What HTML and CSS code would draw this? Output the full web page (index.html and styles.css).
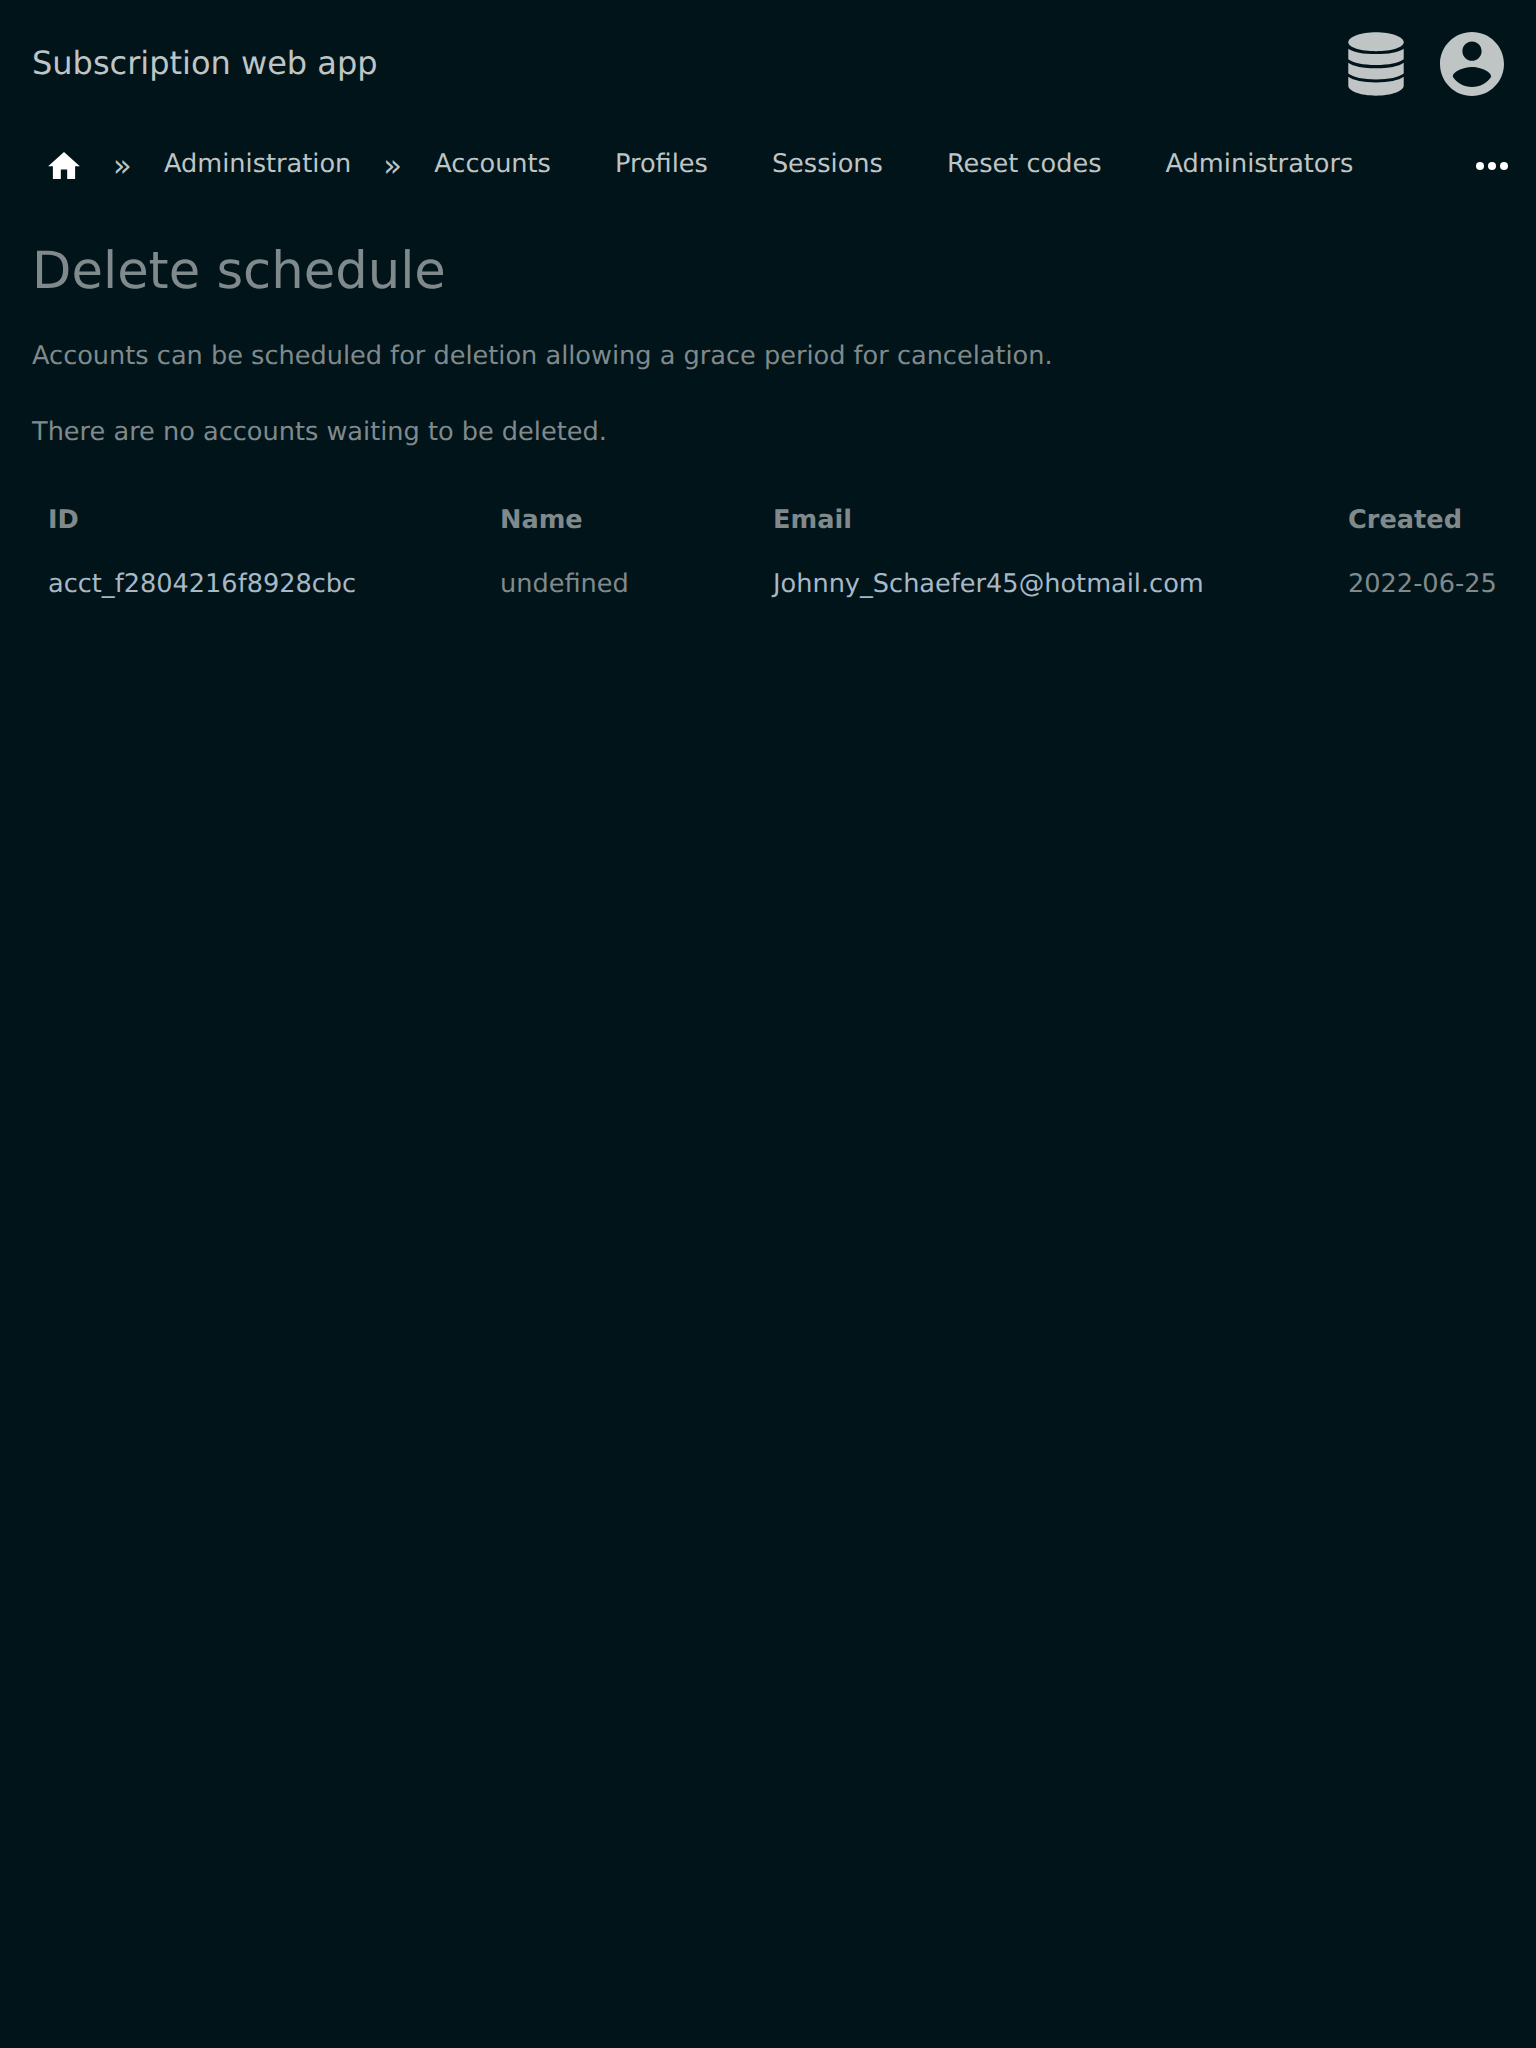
FILE: index.html
```html
<!DOCTYPE html>
<html lang="en">
<head>
<meta charset="utf-8">
<title>Delete schedule</title>
<link rel="stylesheet" href="styles.css">
</head>
<body>
<header class="header">
  <a class="brand">Subscription web app</a>
  <div class="menus">
    <svg class="icon-admin" viewBox="-.3 0 56.600 64"><path d="M28 0C43.500 0 56 4.700 56 10S43.500 19 28 19 0 15.300 0 10 12.500 0 28 0z"/><path d="M0 16.500C5 20 15 22 28 22s23-2 28-5.500V27.200C51 31 41 33 28 33S5 31 0 27.200z"/><path d="M0 30.700C5 34.300 15 36.400 28 36.400s23-2.100 28-5.700V41.600C51 45.500 41 47.600 28 47.600S5 45.500 0 41.600z"/><path d="M0 45C5 48.600 15 50.700 28 50.700s23-2.100 28-5.700V54C56 59.300 43.500 64 28 64S0 59.300 0 54z"/></svg>
    <svg class="icon-account" viewBox="2 2 20 20"><path d="M12 2C6.480 2 2 6.480 2 12s4.480 10 10 10 10-4.480 10-10S17.520 2 12 2zm0 3c1.660 0 3 1.340 3 3s-1.340 3-3 3-3-1.340-3-3 1.340-3 3-3zm0 14.200c-2.500 0-4.710-1.280-6-3.220.03-1.990 4-3.080 6-3.080 1.990 0 5.970 1.090 6 3.080-1.290 1.940-3.500 3.220-6 3.220z"/></svg>
  </div>
</header>
<nav class="nav">
  <svg class="icon-home" viewBox="2 3 20 17"><path d="M10 20v-6h4v6h5v-8h3L12 3 2 12h3v8z"/></svg>
  <span class="separator">»</span>
  <a>Administration</a>
  <span class="separator">»</span>
  <a>Accounts</a>
  <a>Profiles</a>
  <a>Sessions</a>
  <a>Reset codes</a>
  <a>Administrators</a>
  <svg class="icon-more" viewBox="0 0 32 8"><circle cx="4" cy="4" r="4"/><circle cx="16" cy="4" r="4"/><circle cx="28" cy="4" r="4"/></svg>
</nav>
<main class="content">
  <h1>Delete schedule</h1>
  <p>Accounts can be scheduled for deletion allowing a grace period for cancelation.</p>
  <p>There are no accounts waiting to be deleted.</p>
  <table>
    <colgroup><col class="col-id"><col class="col-name"><col class="col-email"><col></colgroup>
    <thead><tr><th>ID</th><th>Name</th><th>Email</th><th>Created</th></tr></thead>
    <tbody><tr><td><a>acct_f2804216f8928cbc</a></td><td>undefined</td><td><a>Johnny_Schaefer45@hotmail.com</a></td><td>2022-06-25</td></tr></tbody>
  </table>
</main>
</body>
</html>
```
FILE: styles.css
```css
* { box-sizing: border-box; }
html { background: #001419; }
body {
  margin: 0;
  font-family: "DejaVu Sans", sans-serif;
  font-size: 25.6px;
  line-height: 38px;
  color: #808a8c;
  text-rendering: geometricPrecision;
}
svg { display: block; flex: none; }
.header {
  display: flex;
  align-items: center;
  justify-content: space-between;
  height: 128px;
  padding: 0 32px;
}
.brand { padding-bottom: 2px; font-size: 32px; color: #bfc4c5; }
.menus { display: flex; gap: 36px; fill: #bfc4c5; }
.icon-admin { width: 56px; height: 64px; }
.icon-account { width: 64px; height: 64px; }
.nav {
  display: flex;
  align-items: center;
  height: 72px;
  padding: 0 28px 0 48px;
  color: #bfc4c5;
  white-space: nowrap;
}
.nav a { padding: 0 32px; }
.nav .separator { width: 19px; padding-top: 3px; font-size: 30.72px; }
.icon-home { width: 32px; height: 27px; margin: 3px 33px 0 0; fill: #fff; }
.icon-more { width: 32px; height: 8px; margin: 4px 0 0 auto; fill: #fff; }
.content { padding: 39px 32px; }
h1 { margin: 0; font-size: 51.2px; font-weight: 400; line-height: 64px; }
p { margin: 34px 0 38px; }
p + p { margin: 0 0 37px; }
table { width: 1504px; table-layout: fixed; border-collapse: collapse; }
.col-id { width: 452px; }
.col-name { width: 273px; }
.col-email { width: 575px; }
th, td { height: 64px; padding: 0 16px; text-align: left; white-space: nowrap; }
td a { color: #a9b8c6; }
```
